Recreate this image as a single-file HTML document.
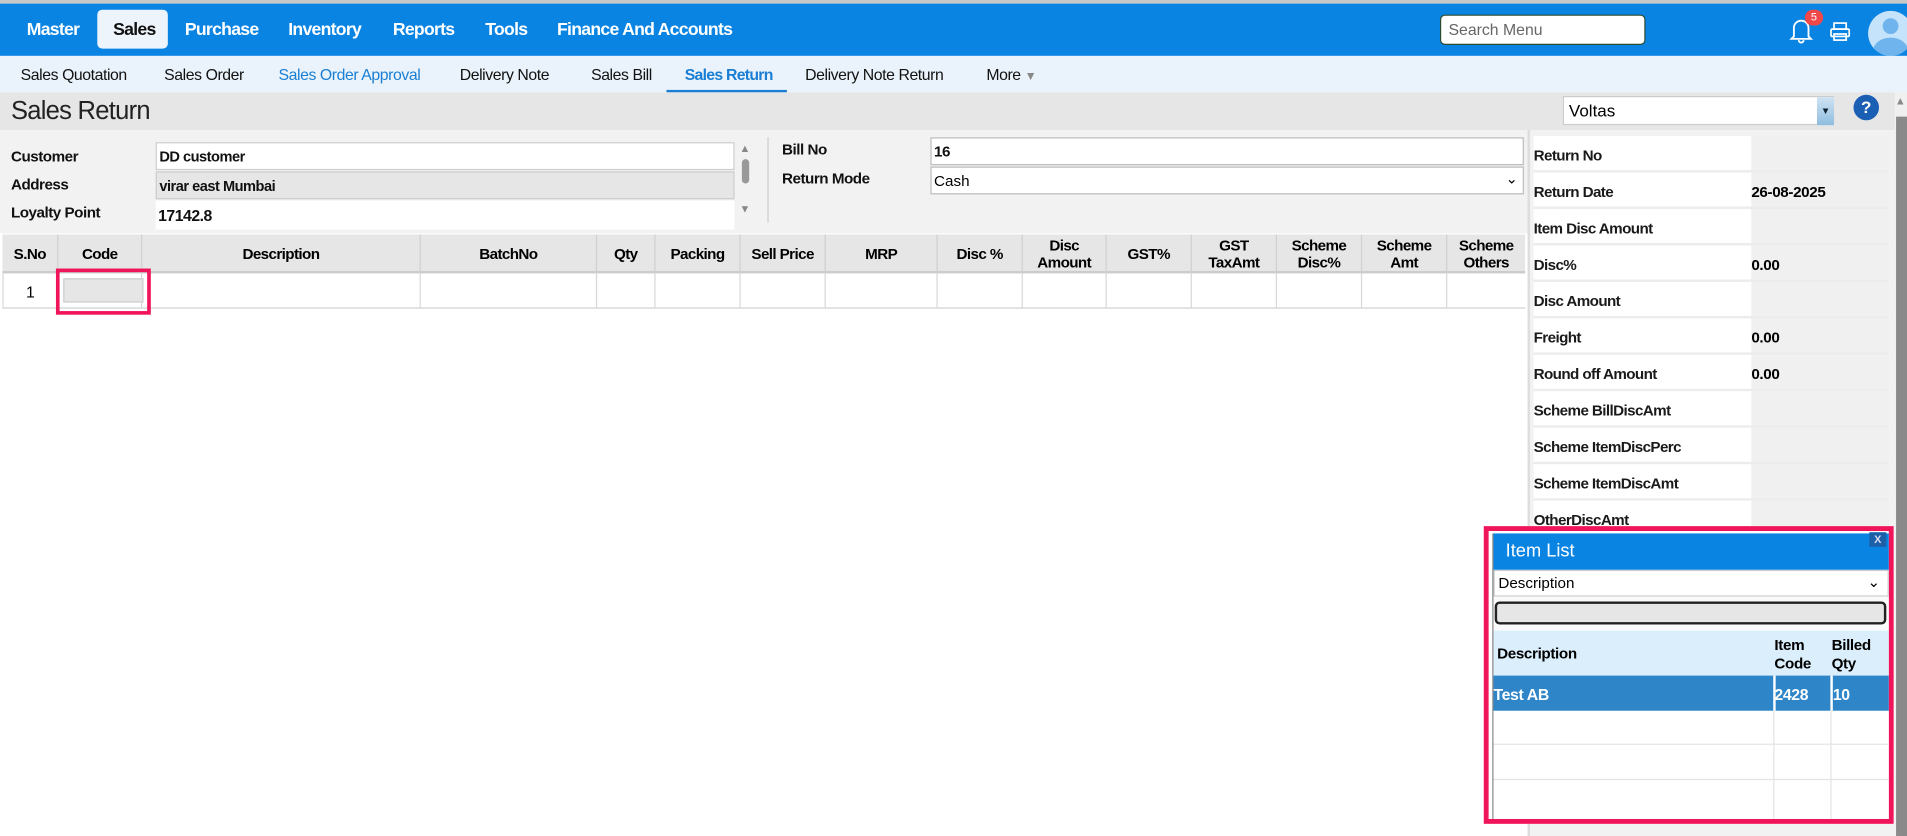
<!DOCTYPE html>
<html><head><meta charset="utf-8"><style>
*{box-sizing:border-box;margin:0;padding:0}
html,body{width:1907px;height:836px;overflow:hidden;background:#fff;font-family:"Liberation Sans",Arial,sans-serif}
#w{position:absolute;left:0;top:0;width:1568px;height:688px;transform:scale(1.2162,1.2151);transform-origin:0 0;background:#fff;overflow:hidden}
.a{position:absolute}
.top{left:0;top:0;width:1568px;height:46px;background:#0a84e3;border-top:3px solid #c8c8c8}
.mi{position:absolute;top:14px;color:#fff;font-weight:bold;font-size:14.5px;letter-spacing:-.6px}
.sub{left:0;top:46px;width:1568px;height:30px;background:#eaf3fb}
.si{position:absolute;top:8px;font-size:13px;color:#111;letter-spacing:-.35px}
.lbl{font-size:12.5px;font-weight:bold;color:#111;letter-spacing:-.4px}
.th{position:absolute;top:193px;height:32px;border-right:1px solid #d0d0d0;font-size:12.5px;font-weight:bold;text-align:center;display:flex;align-items:center;justify-content:center;line-height:14px;letter-spacing:-.5px}
.td{position:absolute;top:225px;height:29px;border-right:1px solid #d8d8d8;border-bottom:1px solid #d0d0d0}
.rr{position:absolute;left:1261px;width:292px;height:30px;border-bottom:2px solid #ececec}
.rr .l{position:absolute;left:0;top:0;width:179px;height:28px;background:#fff;font-size:12.5px;font-weight:bold;padding-top:9px;letter-spacing:-.5px;color:#1a1a1a}
.rr .v{position:absolute;left:179px;top:0;width:113px;height:28px;background:#f0f0f0;font-size:12.5px;font-weight:bold;padding-top:9px;letter-spacing:-.3px}
</style></head><body><div id="w">
<div class="a top">
 <div class="mi" style="left:22px">Master</div>
 <div class="a" style="left:80px;top:5px;width:58px;height:32px;background:#eef4fb;border-radius:4px"></div>
 <div class="mi" style="left:93px;color:#111">Sales</div>
 <div class="mi" style="left:152px">Purchase</div>
 <div class="mi" style="left:237px">Inventory</div>
 <div class="mi" style="left:323px">Reports</div>
 <div class="mi" style="left:399px">Tools</div>
 <div class="mi" style="left:458px">Finance And Accounts</div>
 <div class="a" style="left:1184px;top:9px;width:169px;height:25px;background:#fff;border:1px solid #2d4a30;border-radius:4px;font-size:13px;color:#666;padding:4px 6px">Search Menu</div>
 <svg class="a" style="left:1471px;top:10px" width="20" height="24" viewBox="0 0 20 24"><path d="M4 17V10a6 6 0 0 1 12 0v7l2 2H2z M8 20a2 2 0 0 0 4 0" fill="none" stroke="#fff" stroke-width="1.5"/></svg>
 <div class="a" style="left:1484px;top:5px;width:15px;height:13px;border-radius:7px;background:#f04848;color:#fff;font-size:9px;text-align:center;line-height:13px">5</div>
 <svg class="a" style="left:1504px;top:15px" width="18" height="16" viewBox="0 0 18 16"><rect x="4" y="1" width="10" height="5" fill="none" stroke="#fff" stroke-width="1.4"/><rect x="1.5" y="6" width="15" height="6" rx="1" fill="none" stroke="#fff" stroke-width="1.4"/><rect x="4" y="10" width="10" height="5" fill="none" stroke="#fff" stroke-width="1.4"/></svg>
 <div class="a" style="left:1536px;top:6px;width:37px;height:37px;border-radius:50%;background:#c5e3fa;overflow:hidden"><div class="a" style="left:12px;top:6px;width:13px;height:13px;border-radius:50%;background:#6fb4ec"></div><div class="a" style="left:4px;top:22px;width:29px;height:22px;border-radius:50%;background:#6fb4ec"></div></div>
</div>
<div class="a sub">
 <div class="si" style="left:17px">Sales Quotation</div>
 <div class="si" style="left:135px">Sales Order</div>
 <div class="si" style="left:229px;color:#1a7fd4">Sales Order Approval</div>
 <div class="si" style="left:378px">Delivery Note</div>
 <div class="si" style="left:486px">Sales Bill</div>
 <div class="si" style="left:563px;color:#1a7fd4;font-weight:bold;letter-spacing:-.6px">Sales Return</div>
 <div class="a" style="left:548px;top:28px;width:99px;height:2px;background:#1a7fd4"></div>
 <div class="si" style="left:662px">Delivery Note Return</div>
 <div class="si" style="left:811px">More <span style="color:#888;font-size:10px">&#9660;</span></div>
</div>
<div class="a" style="left:0;top:76px;width:1558px;height:31px;background:#e6e6e6"></div>
<div class="a" style="left:9px;top:80px;font-size:21px;color:#222;letter-spacing:-.6px">Sales Return</div>
<div class="a" style="left:1285px;top:79px;width:223px;height:24px;background:#fff;border:1px solid #ccc;font-size:14px;padding:3px 4px">Voltas</div>
<div class="a" style="left:1494px;top:80px;width:14px;height:23px;background:linear-gradient(#cfe3f3,#8fbde0);font-size:8px;color:#123;text-align:center;line-height:23px">&#9660;</div>
<div class="a" style="left:1524px;top:78px;width:21px;height:21px;border-radius:50%;background:#1a5fb4;color:#fff;font-weight:bold;font-size:14px;text-align:center;line-height:21px">?</div>
<div class="a" style="left:0;top:107px;width:1256px;height:85px;background:#f2f2f2"></div>
<div class="a lbl" style="left:9px;top:122px">Customer</div>
<div class="a lbl" style="left:9px;top:145px">Address</div>
<div class="a lbl" style="left:9px;top:168px">Loyalty Point</div>
<div class="a lbl" style="left:128px;top:117px;width:476px;height:23px;background:#fff;border:1px solid #ccc;padding:4px 2px;font-size:12px">DD customer</div>
<div class="a lbl" style="left:128px;top:141px;width:476px;height:23px;background:#e6e6e6;border:1px solid #ccc;padding:4px 2px;font-size:12px">virar east Mumbai</div>
<div class="a lbl" style="left:128px;top:165px;width:476px;height:24px;background:#fff;padding:5px 2px;font-size:13px">17142.8</div>
<div class="a" style="left:604px;top:117px;width:17px;height:72px;background:#f2f2f2;color:#888;font-size:9px;text-align:center">▲<div style="margin:4px auto;width:6px;height:20px;border-radius:3px;background:#999"></div><div style="margin-top:16px">▼</div></div>
<div class="a" style="left:631px;top:113px;width:1px;height:70px;background:#ccc"></div>
<div class="a lbl" style="left:643px;top:116px">Bill No</div>
<div class="a lbl" style="left:643px;top:140px">Return Mode</div>
<div class="a lbl" style="left:765px;top:113px;width:488px;height:23px;background:#fff;border:1px solid #bbb;padding:4px 2px;font-size:12.5px">16</div>
<div class="a" style="left:765px;top:137px;width:488px;height:23px;background:#fff;border:1px solid #bbb;padding:4px 2px;font-size:12.5px">Cash<span style="position:absolute;right:4px;top:2px;font-size:12px">&#8964;</span></div>
<div class="a" style="left:2px;top:193px;width:1252px;height:32px;background:#e6e6e6;border-bottom:2px solid #ccc"></div>
<div class="th" style="left:2px;width:46px">S.No</div>
<div class="th" style="left:48px;width:69px">Code</div>
<div class="th" style="left:117px;width:229px">Description</div>
<div class="th" style="left:346px;width:145px">BatchNo</div>
<div class="th" style="left:491px;width:48px">Qty</div>
<div class="th" style="left:539px;width:70px">Packing</div>
<div class="th" style="left:609px;width:70px">Sell Price</div>
<div class="th" style="left:679px;width:92px">MRP</div>
<div class="th" style="left:771px;width:70px">Disc %</div>
<div class="th" style="left:841px;width:69px">Disc<br>Amount</div>
<div class="th" style="left:910px;width:70px">GST%</div>
<div class="th" style="left:980px;width:70px">GST<br>TaxAmt</div>
<div class="th" style="left:1050px;width:70px">Scheme<br>Disc%</div>
<div class="th" style="left:1120px;width:70px">Scheme<br>Amt</div>
<div class="th" style="left:1190px;width:64px;border-right:none">Scheme<br>Others</div>
<div class="td" style="left:2px;width:46px;border-left:1px solid #d8d8d8;font-size:13px;text-align:center;padding-top:8px">1</div>
<div class="td" style="left:48px;width:69px"></div><div class="td" style="left:117px;width:229px"></div><div class="td" style="left:346px;width:145px"></div><div class="td" style="left:491px;width:48px"></div><div class="td" style="left:539px;width:70px"></div><div class="td" style="left:609px;width:70px"></div><div class="td" style="left:679px;width:92px"></div><div class="td" style="left:771px;width:70px"></div><div class="td" style="left:841px;width:69px"></div><div class="td" style="left:910px;width:70px"></div><div class="td" style="left:980px;width:70px"></div><div class="td" style="left:1050px;width:70px"></div><div class="td" style="left:1120px;width:70px"></div><div class="td" style="left:1190px;width:64px;border-right:none"></div>
<div class="a" style="left:52px;top:229px;width:66px;height:20px;background:#e6e6e6;border:1px solid #ccc"></div>
<div class="a" style="left:46px;top:221px;width:78px;height:38px;border:3px solid #f0145a"></div>
<div class="a" style="left:1256px;top:107px;width:302px;height:581px;background:#f2f2f2;border-left:2px solid #ddd"></div>
<div class="rr" style="top:112px"><div class="l">Return No</div><div class="v" style="background:#f0f0f0"></div></div>
<div class="rr" style="top:142px"><div class="l">Return Date</div><div class="v">26-08-2025</div></div>
<div class="rr" style="top:172px"><div class="l">Item Disc Amount</div><div class="v"></div></div>
<div class="rr" style="top:202px"><div class="l">Disc%</div><div class="v">0.00</div></div>
<div class="rr" style="top:232px"><div class="l">Disc Amount</div><div class="v"></div></div>
<div class="rr" style="top:262px"><div class="l">Freight</div><div class="v">0.00</div></div>
<div class="rr" style="top:292px"><div class="l">Round off Amount</div><div class="v">0.00</div></div>
<div class="rr" style="top:322px"><div class="l">Scheme BillDiscAmt</div><div class="v"></div></div>
<div class="rr" style="top:352px"><div class="l">Scheme ItemDiscPerc</div><div class="v"></div></div>
<div class="rr" style="top:382px"><div class="l">Scheme ItemDiscAmt</div><div class="v"></div></div>
<div class="rr" style="top:412px"><div class="l">OtherDiscAmt</div><div class="v"></div></div>
<div class="a" style="left:1558px;top:76px;width:10px;height:612px;background:#f0f0f0"></div>
<div class="a" style="left:1559px;top:96px;width:9px;height:592px;background:#8a8a8a"></div>
<div class="a" style="left:1558px;top:78px;font-size:9px;color:#888">▲</div>
<div class="a" style="left:1220px;top:433px;width:337px;height:245px;border:4px solid #f0145a;background:#fff"></div>
<div class="a" style="left:1228px;top:439px;width:325px;height:30px;background:#0a84e3;color:#fff;font-size:15px;padding:6px 10px">Item List</div>
<div class="a" style="left:1537px;top:438px;width:14px;height:12px;background:#1a5fa8;color:#dde;font-size:9px;text-align:center;line-height:12px;font-weight:bold">X</div>
<div class="a" style="left:1228px;top:469px;width:325px;height:22px;background:#fff;border:1px solid #ccc;font-size:12.5px;padding:3px 3px">Description<span style="position:absolute;right:6px;top:1px">&#8964;</span></div>
<div class="a" style="left:1228px;top:491px;width:325px;height:28px;background:#fafafa"></div>
<div class="a" style="left:1229px;top:495px;width:322px;height:19px;background:#e6e6e6;border:2px solid #222;border-radius:4px"></div>
<div class="a" style="left:1228px;top:519px;width:325px;height:37px;background:#dbeefc;font-size:12.5px;font-weight:bold;letter-spacing:-.3px"><div class="a" style="left:3px;top:12px">Description</div><div class="a" style="left:231px;top:5px;line-height:15px">Item<br>Code</div><div class="a" style="left:278px;top:5px;line-height:15px">Billed<br>Qty</div></div>
<div class="a" style="left:1228px;top:556px;width:325px;height:29px;background:#2e86c8;color:#fff;font-size:13px;font-weight:bold;letter-spacing:-.3px"><div class="a" style="left:0;top:8px">Test AB</div><div class="a" style="left:231px;top:8px">2428</div><div class="a" style="left:279px;top:8px">10</div><div class="a" style="left:230px;top:0;width:2px;height:29px;background:#fff"></div><div class="a" style="left:277px;top:0;width:2px;height:29px;background:#fff"></div></div>
<div class="a" style="left:1228px;top:585px;width:325px;height:89px;background:#fff">
 <div class="a" style="left:0;top:27px;width:325px;height:1px;background:#e4e4e4"></div>
 <div class="a" style="left:0;top:56px;width:325px;height:1px;background:#e4e4e4"></div>
 <div class="a" style="left:230px;top:0;width:1px;height:89px;background:#e4e4e4"></div>
 <div class="a" style="left:277px;top:0;width:1px;height:89px;background:#e4e4e4"></div>
</div>
<div class="a" style="left:1227px;top:439px;width:1px;height:235px;background:#888"></div>
</div></body></html>
